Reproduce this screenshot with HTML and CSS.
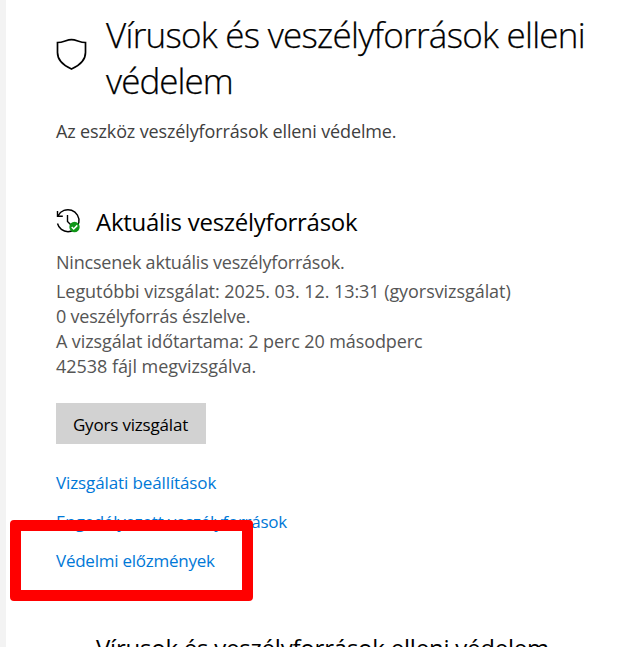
FILE: index.html
```html
<!DOCTYPE html>
<html lang="hu">
<head>
<meta charset="utf-8">
<title>Vírusok és veszélyforrások elleni védelem</title>
<link rel="stylesheet" href="styles.css">
</head>
<body>
<main class="page">
  <header class="header">
    <svg class="shield" viewBox="0 0 32 34" fill="none" stroke="#000" stroke-width="1.7"><path d="M2.500 5.500C8.500 5.500 11.500 2.600 16.500 2.600S24.500 5.500 30.500 5.500V15.500C30.500 23 24.500 28.500 16.500 32C8.500 28.500 2.500 23 2.500 15.500Z"/></svg>
    <h1 class="title"><span class="t1">Vírusok és veszélyforrások elleni</span><br><span class="t2">védelem</span></h1>
  </header>
  <p class="intro">Az eszköz veszélyforrások elleni védelme.</p>
  <section class="threats">
    <h2 class="heading">
      <svg class="history" viewBox="0 0 26 26" fill="none"><path d="M3.300 7.500A11 11 0 1 1 13 23.700A11 11 0 0 1 2.500 15.500M2.500 3V8.300H7.800M12.500 7V13.500L16 17" stroke="#000" stroke-width="1.400"/><circle cx="19.500" cy="19" r="5.200" fill="#109618"/><path d="M16.700 19L18.700 21L22.300 17.400" stroke="#fff" stroke-width="1.500"/></svg>
      <span>Aktuális veszélyforrások</span>
    </h2>
    <p class="status">Nincsenek aktuális veszélyforrások.</p>
    <div class="details">
      <p class="d1">Legutóbbi vizsgálat: 2025. 03. 12. 13:31 (gyorsvizsgálat)</p>
      <p class="d2">0 veszélyforrás észlelve.</p>
      <p class="d3">A vizsgálat időtartama: 2 perc 20 másodperc</p>
      <p class="d4">42538 fájl megvizsgálva.</p>
    </div>
    <button class="scan">Gyors vizsgálat</button>
    <nav class="links">
      <a class="l1">Vizsgálati beállítások</a>
      <a class="l2">Engedélyezett veszélyforrások</a>
      <a class="l3">Védelmi előzmények<span class="marker"></span></a>
    </nav>
  </section>
  <h2 class="next">Vírusok és veszélyforrások elleni védelem</h2>
</main>
</body>
</html>
```
FILE: styles.css
```css
* { box-sizing: border-box; }
html, body { margin: 0; height: 647px; overflow: hidden; }
body { background: #fff; font: 18px/25px "Open Sans", "Noto Sans", sans-serif; color: #555; }
h1, h2, p { margin: 0; font-weight: 400; white-space: nowrap; }
.page { height: 647px; border-left: 6px solid #f3f3f3; padding: 12px 0 0 50px; overflow: hidden; }
.header { display: flex; height: 92px; }
.shield { width: 32px; height: 34px; margin: 25px 19px 0 -1px; flex: none; }
.title { font-size: 35px; line-height: 46px; font-weight: 300; color: #000; letter-spacing: -0.74px; -webkit-text-stroke: 0.25px #000; }
.t2 { letter-spacing: -0.95px; }
.intro { margin-top: 15px; color: #404040; letter-spacing: -0.13px; }
.heading { display: flex; align-items: center; gap: 15px; height: 30px; margin-top: 63px; font-size: 24px; line-height: 30px; color: #000; letter-spacing: -0.27px; }
.history { width: 26px; height: 26px; margin: -2px 0 0 -1px; }
.status { margin-top: 13px; letter-spacing: -0.21px; }
.details { margin-top: 4px; }
.d1 { letter-spacing: -0.06px; }
.d2 { letter-spacing: -0.22px; }
.d3 { letter-spacing: -0.1px; }
.d4 { letter-spacing: -0.04px; }
.scan { display: block; width: 150px; height: 41px; margin-top: 24px; padding: 1px 1px 0 0; border: 0; background: #d2d2d2; color: #000; font: inherit; font-size: 17px; letter-spacing: -0.18px; }
.links { display: flex; flex-direction: column; align-items: flex-start; gap: 14px; margin-top: 26px; font-size: 17px; color: #0078d7; white-space: nowrap; }
.l1 { letter-spacing: -0.11px; }
.l2 { letter-spacing: -0.24px; }
.l3 { position: relative; letter-spacing: -0.24px; }
.marker { position: absolute; left: -46px; top: -28px; width: 243px; height: 81px; border: 11px solid #f00; border-radius: 4px; }
.next { margin: 60px 0 0 40px; font-size: 24px; line-height: 30px; color: #000; letter-spacing: -0.22px; }
```
